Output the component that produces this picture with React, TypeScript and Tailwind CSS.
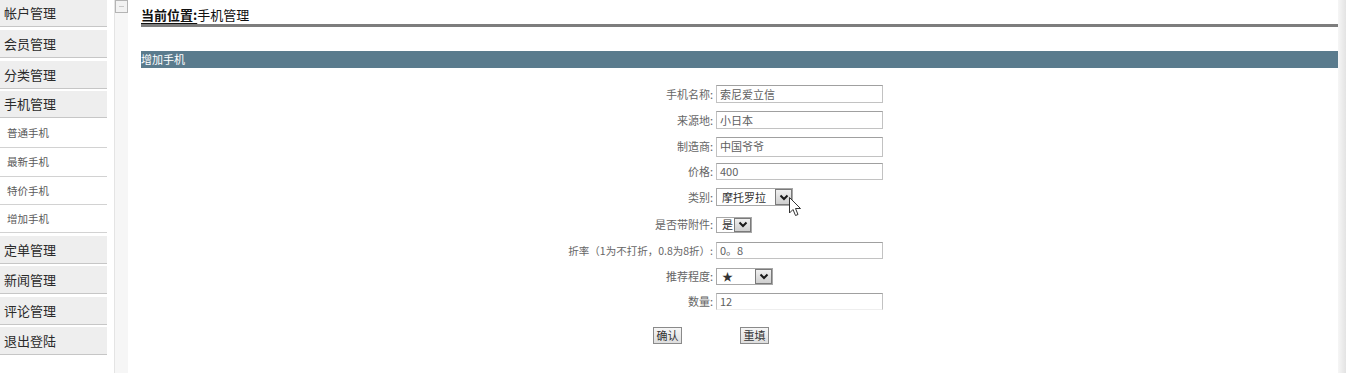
import React from "react";

const font = { fontFamily: '"Noto Sans CJK SC", "Noto Sans", sans-serif' };

function TopItem({ label, cls }: { label: string; cls: string }) {
  return (
    <div className={`flex items-center pl-[4px] bg-[#eeeeee] border-b border-[#c6c6c6] text-[13px] text-[#2a2a2a] ${cls}`}>
      {label}
    </div>
  );
}

function SubItem({ label, cls }: { label: string; cls: string }) {
  return (
    <div className={`flex items-center pl-[7px] bg-white border-b border-[#d2d2d2] text-[10.5px] text-[#5a5a5a] ${cls}`}>
      {label}
    </div>
  );
}

function Chevron() {
  return (
    <div className="ml-auto flex h-full w-[17px] items-center justify-center border border-[#7a7a7a] bg-linear-to-b from-[#f0f0f0] to-[#cfcfcf]">
      <svg width="10" height="7" viewBox="0 0 10 7">
        <polyline points="1.5,1.5 5,5 8.5,1.5" fill="none" stroke="#1a1a1a" strokeWidth="2" />
      </svg>
    </div>
  );
}

function TextInput({ value, h, noBottom }: { value: string; h: string; noBottom?: boolean }) {
  return (
    <div
      className={`flex w-[167px] items-center border border-[#c2c2c2] border-t-[#a0a0a0] pl-[3px] text-[11px] text-[#606060] ${h} ${noBottom ? "border-b-[#eeeeee]" : ""}`}
    >
      {value}
    </div>
  );
}

function Select({ value, w, h }: { value: string; w: string; h: string }) {
  return (
    <div className={`flex items-center border border-[#a8a8a8] pl-[5px] text-[11px] text-[#333] ${w} ${h}`}>
      <span>{value}</span>
      <Chevron />
    </div>
  );
}

function Row({ label, h, children, small }: { label: string; h: string; children: React.ReactNode; small?: boolean }) {
  return (
    <div className={`flex items-center ${h}`}>
      <div className={`w-[575px] pr-[3px] text-right text-[#666] ${small ? "text-[10.5px]" : "text-[11px]"}`}>{label}</div>
      {children}
    </div>
  );
}

export default function App() {
  return (
    <div className="relative flex h-[373px] w-[1346px] overflow-hidden bg-white" style={font}>
      {/* Sidebar */}
      <div className="flex w-[107px] flex-col">
        <TopItem label="帐户管理" cls="h-[27px]" />
        <TopItem label="会员管理" cls="mt-[3px] h-[28px]" />
        <TopItem label="分类管理" cls="mt-[3px] h-[28px]" />
        <TopItem label="手机管理" cls="mt-[2px] h-[27px]" />
        <SubItem label="普通手机" cls="h-[30px]" />
        <SubItem label="最新手机" cls="h-[29px]" />
        <SubItem label="特价手机" cls="h-[28px]" />
        <SubItem label="增加手机" cls="h-[28px]" />
        <TopItem label="定单管理" cls="mt-[3px] h-[28px]" />
        <TopItem label="新闻管理" cls="mt-[2px] h-[28px]" />
        <TopItem label="评论管理" cls="mt-[3px] h-[28px]" />
        <TopItem label="退出登陆" cls="mt-[2px] h-[28px]" />
      </div>

      {/* Scroll strip */}
      <div className="ml-[7px] flex w-[14px] flex-col border-l border-[#e4e4e4] bg-[#f6f6f6]">
        <div className="flex h-[13px] items-center justify-center border border-[#b4b4b4] bg-[#f2f2f2]">
          <div className="h-[1px] w-[5px] bg-[#c8c8c8]" />
        </div>
      </div>

      {/* Main */}
      <div className="flex flex-1 flex-col pl-[13px]">
        <div className="flex h-[24px] items-center pt-[5px] text-[13px] text-[#111]">
          <span className="font-bold underline underline-offset-[3px]">当前位置:</span>
          <span>手机管理</span>
        </div>
        <div className="h-[3px] bg-[#7d7d7d]" />
        <div className="mt-[24px] flex h-[17px] items-center bg-[#5a7b8d] text-[11px] text-white">增加手机</div>

        <div className="mt-[13px] flex flex-col">
          <Row label="手机名称:" h="h-[26px]">
            <TextInput value="索尼爱立信" h="h-[18px]" />
          </Row>
          <Row label="来源地:" h="h-[26px]">
            <TextInput value="小日本" h="h-[18px]" />
          </Row>
          <Row label="制造商:" h="h-[27px]">
            <TextInput value="中国爷爷" h="h-[20px]" />
          </Row>
          <Row label="价格:" h="h-[23px]">
            <TextInput value="400" h="h-[17px]" />
          </Row>
          <Row label="类别:" h="h-[28px]">
            <Select value="摩托罗拉" w="w-[77px]" h="h-[18px]" />
          </Row>
          <Row label="是否带附件:" h="h-[27px]">
            <Select value="是" w="w-[36px]" h="h-[16px]" />
          </Row>
          <Row label="折率（1为不打折，0.8为8折）:" h="h-[25px]" small>
            <TextInput value="0。8" h="h-[17px]" />
          </Row>
          <Row label="推荐程度:" h="h-[26px]">
            <Select value="★" w="w-[57px]" h="h-[17px]" />
          </Row>
          <Row label="数量:" h="h-[24px]">
            <TextInput value="12" h="h-[17px]" noBottom />
          </Row>
          <div className="flex h-[44px] items-center pl-[512px]">
            <button className="flex h-[17px] w-[29px] items-center justify-center border border-[#8a8a8a] bg-linear-to-b from-[#f6f6f6] to-[#dedede] text-[11px] text-[#333]">
              确认
            </button>
            <button className="ml-[58px] flex h-[17px] w-[29px] items-center justify-center border border-[#8a8a8a] bg-linear-to-b from-[#f6f6f6] to-[#dedede] text-[11px] text-[#333]">
              重填
            </button>
          </div>
        </div>
      </div>

      {/* Right shadow */}
      <div className="w-[8px] bg-linear-to-r from-[#f6f6f6] to-[#e3e3e3]" />

      {/* Cursor */}
      <svg className="absolute left-[789px] top-[197px]" width="13" height="20" viewBox="0 0 13 20">
        <path d="M0.5 0.5 L0.5 16 L4 12.5 L6.5 18.5 L9 17.5 L6.5 11.5 L11.5 11.5 Z" fill="white" stroke="#333" strokeWidth="1" />
      </svg>
    </div>
  );
}
